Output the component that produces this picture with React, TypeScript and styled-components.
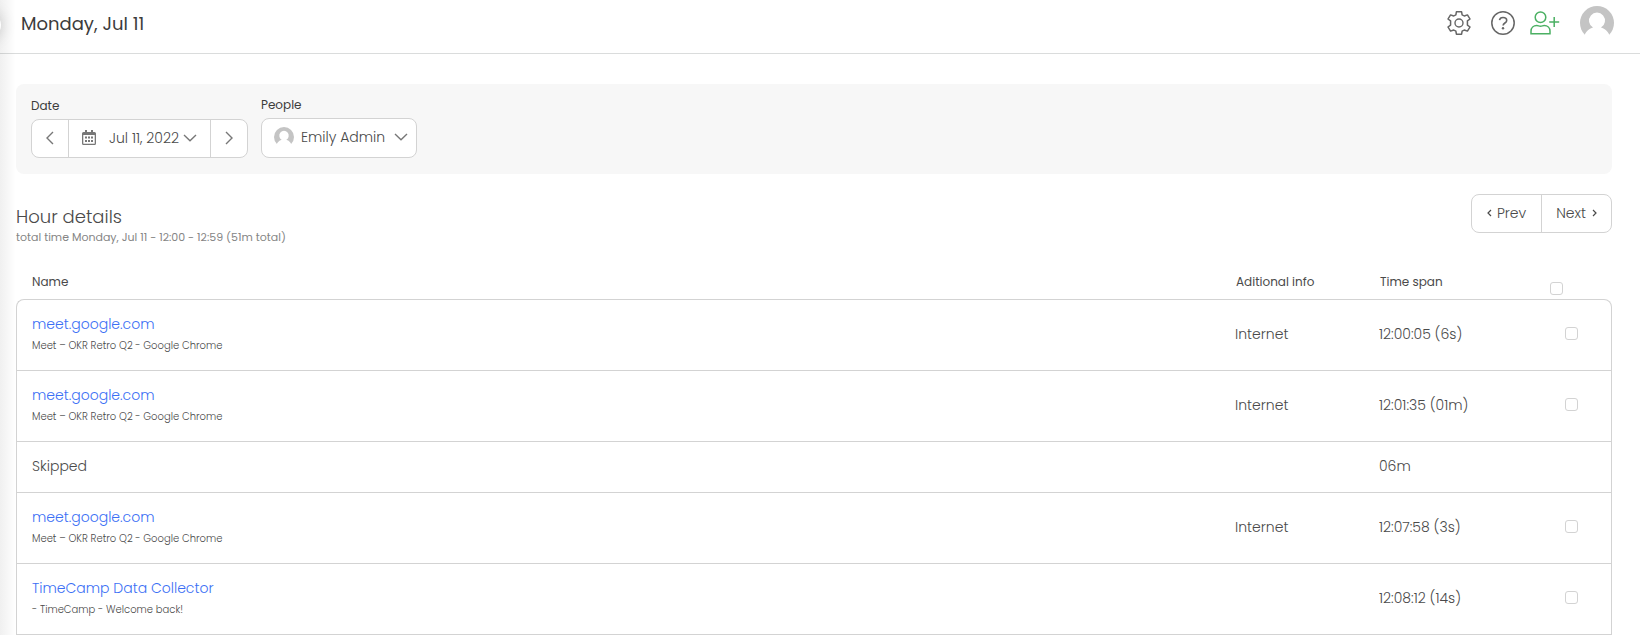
import React from 'react';
import styled, { createGlobalStyle } from 'styled-components';

const line = '#d3d3d3';
const ink = '#4a4a4a';

const GlobalStyle = createGlobalStyle`
  * { box-sizing: border-box; }
  body {
    margin: 0;
    background: #fff;
    color: ${ink};
    font-family: Poppins, Inter, sans-serif;
    font-size: 14px;
    font-weight: 300;
    line-height: 20px;
  }
  button, input { font: inherit; color: inherit; }
`;

const Page = styled.div`
  position: relative;
  overflow: hidden;
  min-height: 100vh;
`;

const SidebarShade = styled.div`
  position: absolute;
  inset: 0 auto 0 0;
  width: 16px;
  background: linear-gradient(to right, rgba(0, 0, 0, 0.06), rgba(0, 0, 0, 0));
  pointer-events: none;
`;

const SidebarToggle = styled.button`
  position: absolute;
  top: 13px;
  left: -23px;
  width: 24px;
  height: 24px;
  padding: 0;
  border: 0;
  border-radius: 50%;
  background: #fff;
  box-shadow: 0 0 16px rgba(0, 0, 0, 0.2);
`;

const Header = styled.header`
  display: flex;
  align-items: center;
  justify-content: space-between;
  height: 54px;
  padding: 0 26px 7px 21px;
  border-bottom: 1px solid #dadcdc;
`;

const Title = styled.h1`
  margin: 0;
  padding-top: 2px;
  font-size: 18px;
  font-weight: 400;
  line-height: 24px;
  color: #3c3c3c;
`;

const Actions = styled.nav`
  display: flex;
  align-items: center;
  color: #666;
`;

const IconButton = styled.button<{ $gap?: number; $color?: string }>`
  display: flex;
  padding: 0;
  margin: 0 0 0 ${p => p.$gap ?? 0}px;
  border: 0;
  background: none;
  color: ${p => p.$color ?? 'inherit'};
`;

const Main = styled.main`
  padding: 30px 28px 0 16px;
`;

const Filters = styled.section`
  display: flex;
  align-items: flex-end;
  gap: 13px;
  padding: 11px 15px 16px;
  border-radius: 8px;
  background: #f7f7f7;
`;

const Field = styled.div`
  display: flex;
  flex-direction: column;
  gap: 3px;
`;

const FieldLabel = styled.span`
  font-size: 12px;
  font-weight: 400;
  color: #3c3c3c;
`;

const ButtonGroup = styled.div`
  display: flex;
  height: 39px;
  border: 1px solid ${line};
  border-radius: 8px;
  background: #fff;
  overflow: hidden;
`;

const GroupButton = styled.button<{ $pad: number; $gap?: number }>`
  display: flex;
  align-items: center;
  gap: ${p => p.$gap ?? 0}px;
  padding: 0 ${p => p.$pad}px 2px;
  border: 0;
  background: none;
  & + & { border-left: 1px solid ${line}; }
`;

const DateText = styled.span`
  margin: 0 4px 0 13px;
`;

const PeopleButton = styled.button`
  display: flex;
  align-items: center;
  height: 40px;
  padding: 0 8px 2px 12px;
  border: 1px solid ${line};
  border-radius: 8px;
  background: #fff;
`;

const PersonName = styled.span`
  margin: 0 9px 0 7px;
`;

const DetailsBar = styled.div`
  display: flex;
  align-items: flex-start;
  justify-content: space-between;
  margin-top: 20px;
`;

const DetailsTitle = styled.h2`
  margin: 11px 0 0;
  font-size: 18px;
  font-weight: 300;
  line-height: 24px;
`;

const DetailsSub = styled.p`
  margin: 0;
  font-size: 11px;
  font-weight: 400;
  line-height: 16px;
  color: #858585;
`;

const Table = styled.table`
  width: 100%;
  margin-top: 22px;
  table-layout: fixed;
  border-collapse: separate;
  border-spacing: 0;
`;

const HeadCell = styled.th<{ $width?: number }>`
  width: ${p => (p.$width ? `${p.$width}px` : 'auto')};
  height: 32px;
  padding: 0 0 2px 17px;
  font-size: 12px;
  font-weight: 400;
  text-align: left;
  &:first-child { padding-left: 16px; }
`;

const HeadCheckCell = styled(HeadCell)`
  padding: 10px 31px 0 0;
`;

const Row = styled.tr<{ $short?: boolean }>`
  height: ${p => (p.$short ? 51 : 71)}px;
  &:first-child { height: 72px; }
`;

const Cell = styled.td`
  padding: 0 16px 3px;
  border-bottom: 1px solid ${line};
  &:first-child { padding-left: 15px; border-left: 1px solid ${line}; }
  &:last-child { padding: 0 0 4px; border-right: 1px solid ${line}; }
  tr:first-child > & { border-top: 1px solid ${line}; }
  tr:first-child > &:first-child { border-top-left-radius: 8px; }
  tr:first-child > &:last-child { border-top-right-radius: 8px; }
`;

const AppLink = styled.a`
  display: block;
  margin: 2px 0;
  color: #3b6ff5;
  text-decoration: none;
`;

const WindowTitle = styled.div`
  font-size: 10px;
`;

const Checkbox = styled.input`
  appearance: none;
  display: block;
  width: 13px;
  height: 13px;
  margin: 0 auto;
  border: 1px solid ${line};
  border-radius: 3px;
  background: #fff;
  &:checked { background: #3b6ff5; }
`;

const Chevron = ({ dir }: { dir: 'left' | 'right' }) => (
  <svg width="10" height="14" viewBox="0 0 10 14" fill="none" stroke="#777" strokeWidth="1.4">
    <path d={dir === 'left' ? 'M8 1 2 7l6 6' : 'M2 1l6 6-6 6'} />
  </svg>
);

const ChevronDown = () => (
  <svg width="14" height="8" viewBox="0 0 14 8" fill="none" stroke="#777" strokeWidth="1.4">
    <path d="M1 1l6 5.700L13 1" />
  </svg>
);

const SmallChevron = ({ dir }: { dir: 'left' | 'right' }) => (
  <svg width="5" height="8" viewBox="0 0 5 8" fill="none" stroke={ink} strokeWidth="1.2">
    <path d={dir === 'left' ? 'M4 1 1 4l3 3' : 'M1 1l3 3-3 3'} />
  </svg>
);

const Calendar = () => (
  <svg width="14" height="15" viewBox="0 0 14 15" fill="#777">
    <path d="M3 0h2v2h4V0h2v2h1.5A1.5 1.5 0 0 1 14 3.5v10a1.5 1.5 0 0 1-1.5 1.5h-11A1.5 1.5 0 0 1 0 13.500v-10A1.500 1.500 0 0 1 1.500 2H3zM1.300 5v8.700h11.400V5z" fillRule="evenodd" />
    <path d="M3 6.500h2v2H3zm3 0h2v2H6zm3 0h2v2H9zM3 10h2v2H3zm3 0h2v2H6zm3 0h2v2H9z" />
  </svg>
);

const Avatar = ({ size }: { size: number }) => (
  <svg width={size} height={size} viewBox="0 0 34 34">
    <circle cx="17" cy="17" r="17" fill="#c4c4c4" />
    <path d="M3 34c1-6 4.500-11 10-12.500a8 8 0 1 1 8 0c5.500 1.500 9 6.500 10 12.500z" fill="#fff" />
  </svg>
);

const Gear = () => (
  <svg width="24" height="24" viewBox="0 0 24 24" fill="none" stroke="currentColor" strokeWidth="1.400" strokeLinejoin="round">
    <circle cx="12" cy="12" r="4" />
    <path d="M9.600 .8h4.800l.5 3 2 1.200 2.900-1.100 2.400 4.100-2.400 1.900v4.200l2.400 1.900-2.400 4.100-2.900-1.100-2 1.200-.5 3H9.600l-.5-3-2-1.200-2.900 1.100L1.800 16l2.400-1.900V9.900L1.800 8l2.400-4.100L7.100 5l2-1.200z" transform="matrix(1.080 0 0 1 -0.960 0)" />
  </svg>
);

const Help = () => (
  <svg width="24" height="24" viewBox="0 0 24 24" fill="none" stroke="currentColor" strokeWidth="1.500">
    <circle cx="12" cy="12" r="11.200" />
    <path d="M8.500 9.200c.3-1.800 1.700-2.700 3.500-2.700s3.700 1 3.700 2.900c0 2.700-3.600 2.500-3.600 5.200" strokeWidth="1.600" />
    <circle cx="12" cy="17.300" r="1.200" fill="currentColor" stroke="none" />
  </svg>
);

const AddUser = () => (
  <svg width="30" height="24" viewBox="0 0 30 24" fill="none" stroke="currentColor" strokeWidth="1.500">
    <circle cx="10.500" cy="6.300" r="5.300" />
    <path d="M1 22.700v-2.500c0-3.500 2.600-5.700 5.800-5.700 1.500 0 2 .8 3.700.8s2.200-.8 3.700-.8c3.200 0 5.800 2.200 5.800 5.700v2.500zM24.200 6v10M19.200 11h10" />
  </svg>
);

type Entry = { name: string; title?: string; info?: string; time: string };

const entries: Entry[] = [
  { name: 'meet.google.com', title: 'Meet – OKR Retro Q2 - Google Chrome', info: 'Internet', time: '12:00:05 (6s)' },
  { name: 'meet.google.com', title: 'Meet – OKR Retro Q2 - Google Chrome', info: 'Internet', time: '12:01:35 (01m)' },
  { name: 'Skipped', time: '06m' },
  { name: 'meet.google.com', title: 'Meet – OKR Retro Q2 - Google Chrome', info: 'Internet', time: '12:07:58 (3s)' },
  { name: 'TimeCamp Data Collector', title: '- TimeCamp - Welcome back!', time: '12:08:12 (14s)' },
];

export default function App() {
  return (
    <Page>
      <GlobalStyle />
      <Header>
        <Title>Monday, Jul 11</Title>
        <Actions>
          <IconButton aria-label="Settings"><Gear /></IconButton>
          <IconButton aria-label="Help" $gap={20}><Help /></IconButton>
          <IconButton aria-label="Invite people" $gap={15} $color="#4bb063"><AddUser /></IconButton>
          <IconButton aria-label="Account" $gap={20}><Avatar size={34} /></IconButton>
        </Actions>
      </Header>
      <Main>
        <Filters>
          <Field>
            <FieldLabel id="date-label">Date</FieldLabel>
            <ButtonGroup role="group" aria-labelledby="date-label">
              <GroupButton $pad={13} aria-label="Previous day"><Chevron dir="left" /></GroupButton>
              <GroupButton $pad={13}>
                <Calendar />
                <DateText>Jul 11, 2022</DateText>
                <ChevronDown />
              </GroupButton>
              <GroupButton $pad={13} aria-label="Next day"><Chevron dir="right" /></GroupButton>
            </ButtonGroup>
          </Field>
          <Field>
            <FieldLabel id="people-label">People</FieldLabel>
            <PeopleButton aria-labelledby="people-label person-name">
              <Avatar size={20} />
              <PersonName id="person-name">Emily Admin</PersonName>
              <ChevronDown />
            </PeopleButton>
          </Field>
        </Filters>
        <DetailsBar>
          <div>
            <DetailsTitle>Hour details</DetailsTitle>
            <DetailsSub>total time Monday, Jul 11 - 12:00 - 12:59 (51m total)</DetailsSub>
          </div>
          <ButtonGroup>
            <GroupButton $pad={15} $gap={5}><SmallChevron dir="left" />Prev</GroupButton>
            <GroupButton $pad={14} $gap={6}>Next<SmallChevron dir="right" /></GroupButton>
          </ButtonGroup>
        </DetailsBar>
        <Table>
          <thead>
            <tr>
              <HeadCell>Name</HeadCell>
              <HeadCell $width={144}>Aditional info</HeadCell>
              <HeadCell $width={168}>Time span</HeadCell>
              <HeadCheckCell $width={81}><Checkbox type="checkbox" aria-label="Select all" /></HeadCheckCell>
            </tr>
          </thead>
          <tbody>
            {entries.map((e, i) => (
              <Row key={i} $short={!e.title}>
                <Cell>
                  {e.title ? <><AppLink href="#">{e.name}</AppLink><WindowTitle>{e.title}</WindowTitle></> : e.name}
                </Cell>
                <Cell>{e.info}</Cell>
                <Cell>{e.time}</Cell>
                <Cell>{e.title && <Checkbox type="checkbox" aria-label={`Select ${e.name} ${e.time}`} />}</Cell>
              </Row>
            ))}
          </tbody>
        </Table>
      </Main>
      <SidebarShade />
      <SidebarToggle aria-label="Toggle sidebar" />
    </Page>
  );
}
